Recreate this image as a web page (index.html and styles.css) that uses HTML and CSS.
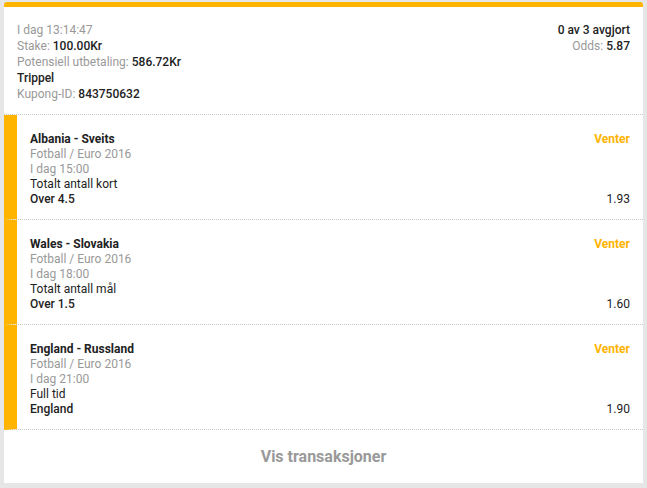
FILE: index.html
```html
<!DOCTYPE html>
<html lang="no">

<head>
    <meta charset="UTF-8">
    <meta name="viewport" content="width=device-width, initial-scale=1.0">
    <title>Kupong</title>
    <link rel="stylesheet" href="styles.css">
</head>

<body>
    <div class="coupon">
        <div class="summary">
            <div class="summary-left">
                <div class="muted">I dag 13:14:47</div>
                <div><span class="muted">Stake:</span> <span class="value">100.00Kr</span></div>
                <div><span class="muted">Potensiell utbetaling:</span> <span class="value">586.72Kr</span></div>
                <div class="value">Trippel</div>
                <div><span class="muted">Kupong-ID:</span> <span class="value">843750632</span></div>
            </div>
            <div class="summary-right">
                <div class="value">0 av 3 avgjort</div>
                <div><span class="muted">Odds:</span> <span class="value">5.87</span></div>
            </div>
        </div>

        <div class="selection">
            <div class="row">
                <span class="match">Albania - Sveits</span>
                <span class="status">Venter</span>
            </div>
            <div class="muted">Fotball / Euro 2016</div>
            <div class="muted">I dag 15:00</div>
            <div>Totalt antall kort</div>
            <div class="row">
                <span class="value">Over 4.5</span>
                <span>1.93</span>
            </div>
        </div>

        <div class="selection">
            <div class="row">
                <span class="match">Wales - Slovakia</span>
                <span class="status">Venter</span>
            </div>
            <div class="muted">Fotball / Euro 2016</div>
            <div class="muted">I dag 18:00</div>
            <div>Totalt antall mål</div>
            <div class="row">
                <span class="value">Over 1.5</span>
                <span>1.60</span>
            </div>
        </div>

        <div class="selection">
            <div class="row">
                <span class="match">England - Russland</span>
                <span class="status">Venter</span>
            </div>
            <div class="muted">Fotball / Euro 2016</div>
            <div class="muted">I dag 21:00</div>
            <div>Full tid</div>
            <div class="row">
                <span class="value">England</span>
                <span>1.90</span>
            </div>
        </div>

        <div class="footer">Vis transaksjoner</div>
    </div>
</body>

</html>
```

FILE: styles.css
```css
body {
    margin: 0;
    padding: 2px 4px 5px;
    background-color: #e6e6e6;
    font-family: Roboto, 'Liberation Sans', sans-serif;
    font-size: 12px;
    color: #222;
}

.coupon {
    background-color: white;
    border-top: 5px solid #ffb400;
    border-radius: 3px 3px 0 0;
    height: 476px;
    display: flex;
    flex-direction: column;
}

.muted {
    color: #999;
}

.value {
    font-weight: 500;
}

.summary {
    display: flex;
    justify-content: space-between;
    padding: 15px 13px 12px;
    line-height: 16px;
    border-bottom: 1px dotted #c8c8c8;
}

.summary-right {
    text-align: right;
}

.selection {
    border-left: 13px solid #ffb400;
    border-bottom: 1px dotted #c8c8c8;
    padding: 17px 13px 12px;
    line-height: 15px;
}

.row {
    display: flex;
    justify-content: space-between;
}

.match {
    font-weight: 700;
}

.status {
    color: #ffb400;
    font-weight: 700;
}

.footer {
    flex: 1;
    display: flex;
    align-items: center;
    justify-content: center;
    color: #999;
    font-size: 16px;
    font-weight: 700;
}
```
